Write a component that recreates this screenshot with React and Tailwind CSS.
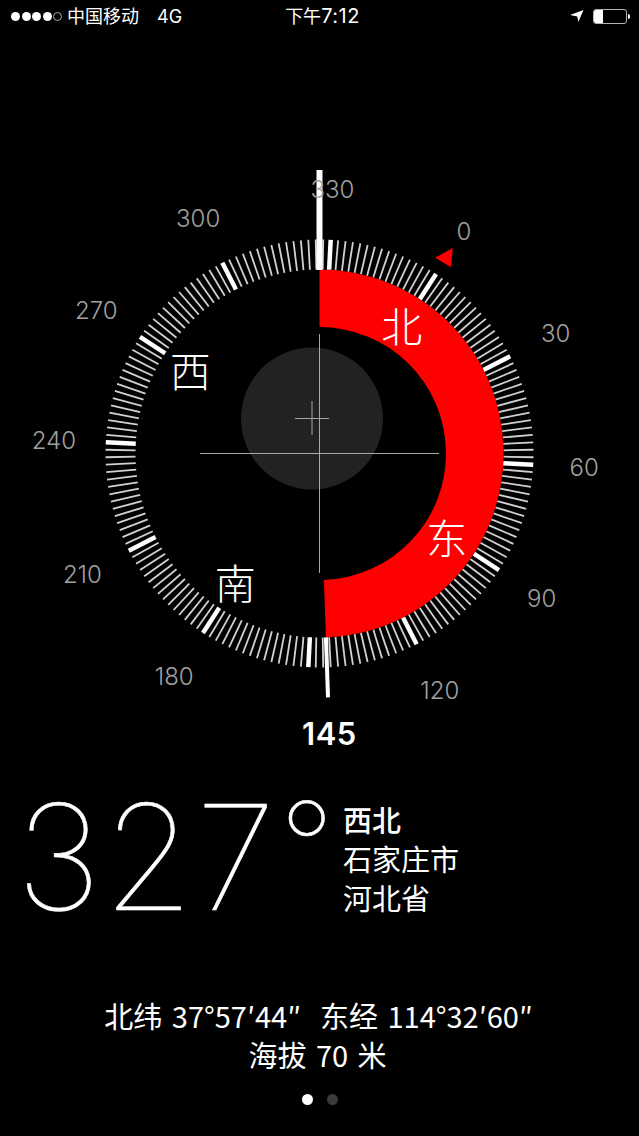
import React from 'react';

const CX = 319.5;
const CY = 453.5;

// clockwise from straight up, in degrees
const polar = (deg, r) => {
  const a = (deg * Math.PI) / 180;
  return [CX + r * Math.sin(a), CY - r * Math.cos(a)];
};

const NORTH = 33;
const ticks = Array.from({ length: 180 }, (_, i) => i * 2);
const labels = [0, 30, 60, 90, 120, 180, 210, 240, 270, 300, 330];
const cardinals = [
  ['北', 0],
  ['东', 90],
  ['南', 180],
  ['西', 270],
];

const redArc = () => {
  const [ax, ay] = polar(0, 184);
  const [bx, by] = polar(178, 184);
  const [cx, cy] = polar(178, 126.5);
  const [dx, dy] = polar(0, 126.5);
  return `M${ax} ${ay}A184 184 0 0 1 ${bx} ${by}L${cx} ${cy}A126.5 126.5 0 0 0 ${dx} ${dy}Z`;
};

const StatusBar = () => (
  <div className="h-[32px] flex items-center justify-between pl-[11px] pr-[9px] mb-[2px] text-white text-[18px] font-['Inter','Noto_Sans_CJK_SC',sans-serif]">
    <div className="flex items-center w-[244px]">
      <div className="flex items-center gap-[1.5px]">
        <span className="w-[9px] h-[9px] rounded-full bg-white" />
        <span className="w-[9px] h-[9px] rounded-full bg-white" />
        <span className="w-[9px] h-[9px] rounded-full bg-white" />
        <span className="w-[9px] h-[9px] rounded-full bg-white" />
        <span className="w-[9px] h-[9px] rounded-full border border-[#aaaaaa]" />
      </div>
      <span className="ml-[5px]">中国移动</span>
      <span className="ml-[18px] text-[18px]">4G</span>
    </div>
    <span className="flex items-center"><span>下午</span><span className="text-[20px] tracking-[0.5px]">7:12</span></span>
    <div className="flex items-center justify-end w-[240px] gap-[9px]">
      <svg width="14" height="12" viewBox="0 0 14 12">
        <polygon points="13.5,0 0,5 7.3,6.5 8.3,12" fill="#fff" />
      </svg>
      <div className="flex items-center">
        <div className="w-[34px] h-[15px] rounded-[3px] border border-[#b4b4b4] overflow-hidden">
          <div className="w-[9px] h-full bg-white" />
        </div>
        <span className="ml-[1px] w-[2px] h-[5px] bg-white rounded-r-full" />
      </div>
    </div>
  </div>
);

const Dial = () => (
  <svg width="639" height="736" viewBox="0 34 639 736" className="block">
    {ticks.map((t) => {
      const heavy = t % 30 === 0;
      const [x1, y1] = polar(NORTH + t, 184);
      const [x2, y2] = polar(NORTH + t, 214);
      return (
        <line
          key={t}
          x1={x1}
          y1={y1}
          x2={x2}
          y2={y2}
          stroke="#fff"
          strokeWidth={heavy ? 4.5 : 1.8}
          strokeOpacity={heavy ? 1 : 0.82}
        />
      );
    })}

    <path d={redArc()} fill="#ff0000" />

    {/* level bubble */}
    <circle cx="312" cy="418.5" r="71" fill="#fff" fillOpacity="0.135" />
    <path d="M295 418.5H329M312 401V435" stroke="#a8a8a8" strokeWidth="1" fill="none" />
    <path d="M200 453.5H439M319.5 334V573" stroke="#a8a8a8" strokeWidth="1" fill="none" />

    {/* heading and bearing needles */}
    <line x1={CX} y1="170" x2={CX} y2="270" stroke="#fff" strokeWidth="6" />
    <line x1={polar(178, 184)[0]} y1={polar(178, 184)[1]} x2={polar(178, 244)[0]} y2={polar(178, 244)[1]} stroke="#fff" strokeWidth="4" />

    <polygon points="452.7,248 435.3,257.7 451,267.3" fill="#ff0000" />

    {labels.map((l) => {
      const [x, y] = polar(NORTH + l, 265);
      const left = l > 120;
      return (
        <text key={l} x={left ? x - 1 : x} y={l < 90 ? y : y + 1} textAnchor="middle" dominantBaseline="central" className="fill-[#a0a0a0] text-[24px] font-light font-['Inter',sans-serif]">
          {l}
        </text>
      );
    })}

    {cardinals.map(([c, a]) => {
      const [x, y] = polar(NORTH + a, 153);
      return (
        <text key={c} x={x - 1} y={y - 1} textAnchor="middle" dominantBaseline="central" className="fill-white text-[41px] font-light font-['Noto_Sans_CJK_SC',sans-serif]">
          {c}
        </text>
      );
    })}

    <text x="329.5" y="733" textAnchor="middle" dominantBaseline="central" className="fill-white text-[31px] font-semibold tracking-[0.5px] font-['Inter',sans-serif]">
      145
    </text>
  </svg>
);

const App = () => (
  <div className="w-[639px] h-[1136px] bg-black overflow-hidden flex flex-col text-white font-['Noto_Sans_CJK_SC',sans-serif]">
    <StatusBar />
    <Dial />

    <div className="flex items-start pl-[16px] h-[178px]">
      <div className="flex items-start w-[327px] font-thin font-['Inter',sans-serif] [-webkit-text-stroke:0.6px_white]">
        <span className="text-[146px] leading-[146px] tracking-[2px] mt-[14px]">327</span>
        <span className="text-[120px] leading-[120px] mt-[16px] ml-[2px]">°</span>
      </div>
      <div className="text-[29px] leading-[39px] mt-[30px]">
        <div className="font-medium">西北</div>
        <div>石家庄市</div>
        <div>河北省</div>
      </div>
    </div>

    <div className="mt-[48px] text-center text-[29px] leading-[39px] whitespace-pre">
      <div className="[word-spacing:3px] pr-[2px]">北纬 37°57′44″  东经 114°32′60″</div>
      <div className="[word-spacing:3px] pr-[4px]">海拔 70 米</div>
    </div>

    <div className="mt-[20px] flex justify-center gap-[14px] pl-[1px]">
      <span className="w-[11px] h-[11px] rounded-full bg-white" />
      <span className="w-[11px] h-[11px] rounded-full bg-[#3a3a3a]" />
    </div>
  </div>
);

export default App;
